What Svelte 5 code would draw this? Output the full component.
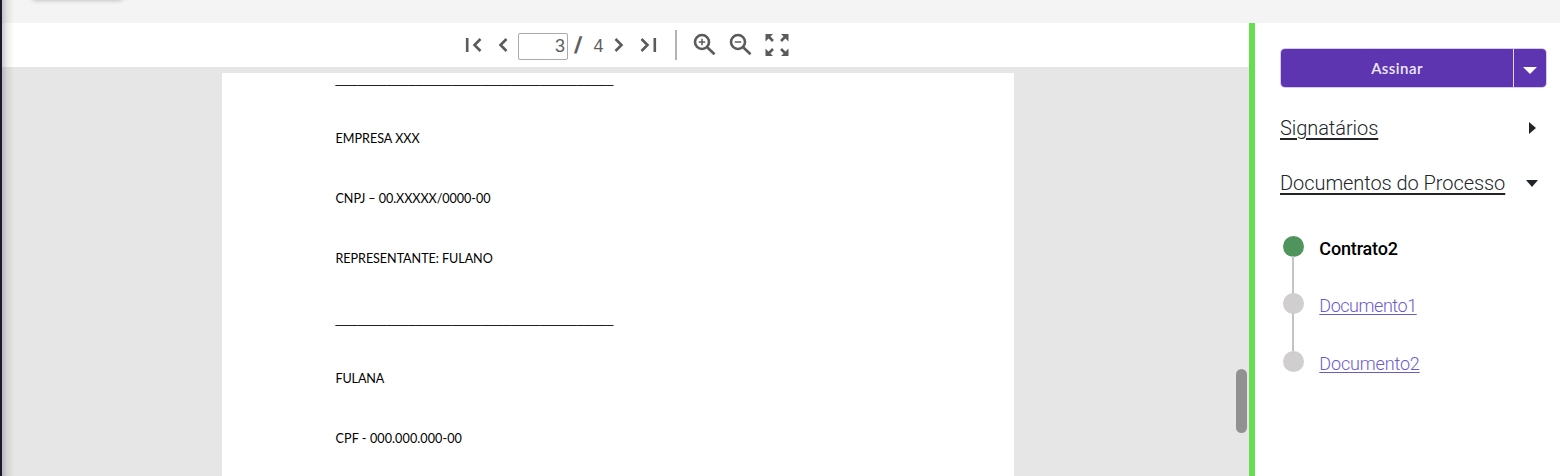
<script>
  const lines = [
    { text: '______________________________________', cls: 'rule' },
    { text: 'EMPRESA XXX', cls: 'l1' },
    { text: 'CNPJ – 00.XXXXX/0000-00', cls: 'l2' },
    { text: 'REPRESENTANTE: FULANO', cls: 'l3' },
    { text: '______________________________________', cls: 'rule' },
    { text: 'FULANA', cls: 'l4' },
    { text: 'CPF - 000.000.000-00', cls: 'l5' }
  ];
  const documents = [
    { name: 'Contrato2', cls: 'c' },
    { name: 'Documento1', cls: 'd1' },
    { name: 'Documento2', cls: 'd2' }
  ];
</script>

<div class="app">
  <header class="top"><div class="tab"></div></header>
  <div class="body">
    <main class="viewer">
      <div class="toolbar">
        <svg class="first" width="18" height="16" viewBox="0 0 18 16"><path d="M2.2 1v14M15.5 2l-6 6 6 6" /></svg>
        <svg class="prev" width="11" height="16" viewBox="0 0 11 16"><path d="M8.5 2l-6 6 6 6" /></svg>
        <div class="page-input">3</div>
        <span class="slash">/</span>
        <span class="total">4</span>
        <svg class="next" width="11" height="16" viewBox="0 0 11 16"><path d="M2.5 2l6 6-6 6" /></svg>
        <svg class="last" width="18" height="16" viewBox="0 0 18 16"><path d="M2.5 2l6 6-6 6M15.8 1v14" /></svg>
        <i class="divider"></i>
        <svg class="zoom" width="24" height="24" viewBox="0 0 24 24"><circle cx="9" cy="9" r="7" /><path d="M14.2 14.2l7.3 7" /><path class="thin" d="M5.8 9h6.4M9 5.8v6.4" /></svg>
        <svg class="zoom" width="24" height="24" viewBox="0 0 24 24"><circle cx="9" cy="9" r="7" /><path d="M14.2 14.2l7.3 7" /><path class="thin" d="M5.8 9h6.4" /></svg>
        <svg class="full" width="24" height="24" viewBox="0 0 24 24">
          <path d="M3 3l5 5M21 3l-5 5M3 21l5-5M21 21l-5-5" />
          <path class="fill" d="M.5 1H8L.5 8.5zM23.5 1V8.5L16 1zM.5 23V15.5L8 23zM23.5 23H16l7.5-7.5z" />
        </svg>
      </div>
      <div class="canvas">
        <div class="sheet">
          {#each lines as line}
            <p><span class={line.cls}>{line.text}</span></p>
          {/each}
        </div>
        <div class="thumb"></div>
      </div>
    </main>
    <aside>
      <div class="sign">
        <button class="main">Assinar</button>
        <button class="more" aria-label="Mais opções"><svg width="14" height="7" viewBox="0 0 14 7"><path d="M0 0h14L7 7z" fill="#fff" /></svg></button>
      </div>
      <div class="section">
        <span class="t1">Signatários</span>
        <svg class="right" width="7" height="12" viewBox="0 0 7 12"><path d="M0 0l7 6-7 6z" fill="#212529" /></svg>
      </div>
      <div class="section">
        <span class="t2">Documentos do Processo</span>
        <svg class="down" width="12" height="7" viewBox="0 0 12 7"><path d="M0 0h12L6 7z" fill="#212529" /></svg>
      </div>
      <ul>
        {#each documents as doc}
          <li class={doc.cls}><i></i><span>{doc.name}</span></li>
        {/each}
      </ul>
    </aside>
  </div>
  <div class="edge"></div>
</div>

<style>
  .app { position: relative; height: 476px; display: flex; flex-direction: column; overflow: hidden; background: #fff; }
  .top { height: 23px; background: #f4f4f4; flex: none; padding-left: 32px; overflow: hidden; box-sizing: border-box; }
  .tab { width: 91px; height: 10px; margin-top: -10px; background: #f4f4f4; border-radius: 4px; box-shadow: 0 0 5px rgba(0, 0, 0, .28); }
  .body { flex: 1; min-height: 0; display: flex; }
  .viewer { width: 1249px; flex: none; display: flex; flex-direction: column; }
  .toolbar { height: 44px; flex: none; display: flex; align-items: center; padding-left: 464.5px; color: #5f5f5f; font-family: "Liberation Sans", Arial, sans-serif; }
  svg { flex: none; display: block; }
  .toolbar svg { fill: none; stroke: #5b5b5b; stroke-width: 2.6; }
  .toolbar .thin { stroke-width: 1.5; }
  .toolbar .fill { fill: #5b5b5b; stroke: none; }
  .prev { margin-left: 15px; }
  .page-input { box-sizing: border-box; width: 50px; height: 27px; border: 1px solid #aaa; border-radius: 2px; margin: 2px 0 0 9.5px; padding-right: 2px; text-align: right; font-size: 18px; line-height: 25px; }
  .slash { width: 20px; text-align: center; font-size: 23px; line-height: 24px; font-weight: bold; transform: skewX(-8deg); }
  .total { width: 21px; text-align: center; font-size: 18px; padding-top: 2px; }
  .next { margin-left: 4px; }
  .last { margin-left: 15px; }
  .divider { width: 2px; height: 30px; background: #b2b2b2; margin: 0 16px 0 18px; }
  .zoom { margin-right: 12px; }
  .canvas { position: relative; flex: 1; min-height: 0; background: #e6e6e6; padding: 6px 0 0 222px; overflow: hidden; }
  .sheet { width: 792px; height: 440px; background: #fff; box-sizing: border-box; padding: 1px 0 0 113.5px; }
  p { margin: 0; height: 60px; line-height: 20px; font-family: Lato, sans-serif; font-size: 12.6px; color: #000; white-space: nowrap; }
  p:first-child { height: 55px; line-height: 10px; }
  .rule { font-family: "Liberation Sans", Arial, sans-serif; font-size: 13.15px; }
  .l2, .l3 { letter-spacing: -.06px; }
  .l4 { letter-spacing: -.15px; }
  .l5 { letter-spacing: .08px; }
  .thumb { position: absolute; left: 1236px; top: 302px; width: 11px; height: 64px; border-radius: 6px; background: #919191; }
  aside { flex: 1; border-left: 6px solid #67de4e; padding: 25px 13px 0 25px; font-family: Roboto, sans-serif; }
  .sign { display: flex; box-sizing: border-box; height: 40px; border: 1px solid #d6cdea; border-radius: 5px; overflow: hidden; }
  button { border: 0; padding: 0; background: #5e35b1; color: #fff; font: 600 15px Lato, sans-serif; }
  .main { flex: 1; color: #efe9f8; letter-spacing: .45px; }
  .more { width: 33px; border-left: 1px solid #e0d8f0; display: flex; align-items: center; justify-content: center; padding-top: 4px; }
  .section { display: flex; justify-content: space-between; align-items: center; height: 30px; margin-top: 25px; font-weight: 300; font-size: 20px; color: #212529; }
  .section span { text-decoration: underline; text-decoration-thickness: 2px; text-underline-offset: 3px; text-decoration-skip-ink: auto; white-space: nowrap; letter-spacing: -.06px; }
  .right { margin-right: 11px; }
  .down { margin-right: 9px; }
  ul { list-style: none; margin: 38px 0 0 3px; padding: 0; }
  li { display: flex; height: 57.4px; position: relative; gap: 15.3px; color: #6a5acd; font-weight: 300; font-size: 18px; }
  li i { width: 21px; height: 21px; border-radius: 50%; background: #d0cece; flex: none; }
  li:not(:last-child)::before { content: ""; position: absolute; left: 9px; top: 20px; width: 2px; height: 38px; background: #c3c3c3; }
  li span { line-height: 25px; text-decoration: underline; text-decoration-thickness: 1px; text-underline-offset: 2px; }
  .c { color: #000; font-weight: 500; letter-spacing: -.15px; }
  .c i { background: #4f935d; }
  .c span { text-decoration: none; }
  .d1 { letter-spacing: -.45px; }
  .d2 { letter-spacing: -.15px; }
  .edge { position: absolute; left: 0; top: 0; width: 14px; height: 476px; box-sizing: border-box; border-left: 2px solid #1a1a2e; background: linear-gradient(90deg, rgba(0, 0, 0, .2), rgba(0, 0, 0, .07) 45%, transparent); }
</style>
